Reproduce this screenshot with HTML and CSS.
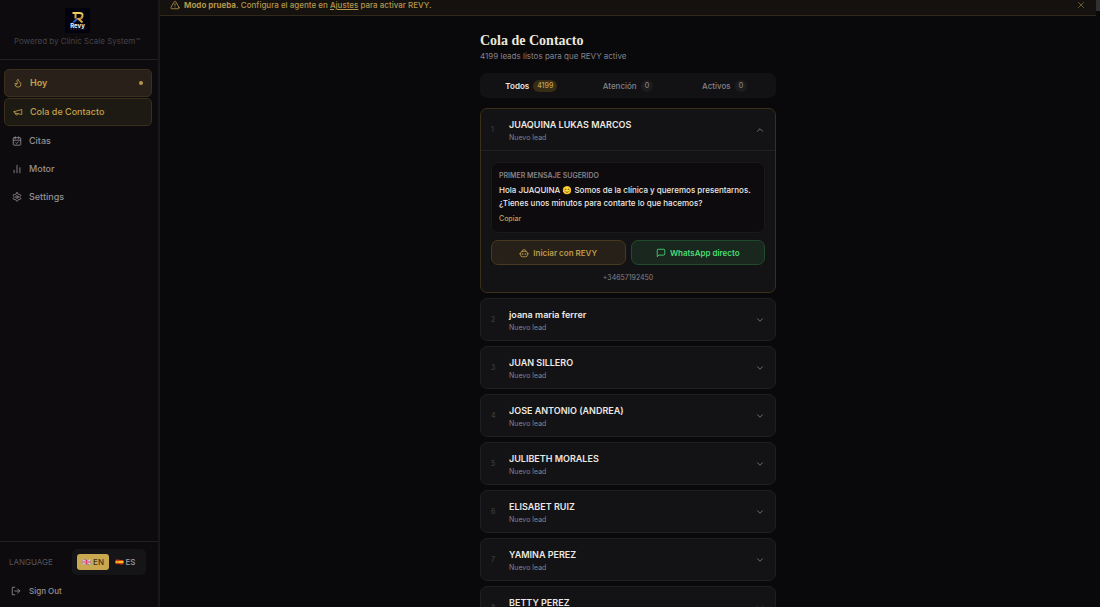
FILE: index.html
```html
<!DOCTYPE html>
<html lang="es">
<head>
<meta charset="utf-8">
<title>Cola de Contacto</title>
<link rel="stylesheet" href="styles.css">
</head>
<body>
<svg class="defs" aria-hidden="true">
  <symbol id="down" viewBox="0 0 24 24"><path d="m6 9 6 6 6-6"/></symbol>
  <symbol id="up" viewBox="0 0 24 24"><path d="m18 15-6-6-6 6"/></symbol>
</svg>
<div class="app">
  <aside class="sidebar">
    <header class="brand">
      <svg class="logo" viewBox="0 0 50 50" role="img" aria-label="Revy">
        <defs><linearGradient id="gold" x1="0" y1="0" x2="0" y2="1"><stop offset="0" stop-color="#f5cf62"/><stop offset="1" stop-color="#b9862b"/></linearGradient></defs>
        <rect width="50" height="50" fill="#02020e"/>
        <path d="M15 10h14q7 0 6 6-1 6-8 6h-4" fill="none" stroke="url(#gold)" stroke-width="4"/>
        <path d="M21 12v9M26 21l9 8" fill="none" stroke="#d9a840" stroke-width="4"/>
        <path d="m14 29 8-8 4 2-7 6z" fill="#2a62c8"/>
        <text x="25" y="39" text-anchor="middle" class="logo-text">Revy</text>
        <path d="M11 42h28" stroke="#64728c" stroke-width="1" stroke-dasharray="3 2"/>
      </svg>
      <p class="powered">Powered by Clinic Scale System™</p>
    </header>
    <nav class="nav">
      <a class="nav-item current today" href="#"><svg class="icon" viewBox="0 0 24 24"><path d="M8.500 14.500A2.500 2.500 0 0 0 11 12c0-1.380-.5-2-1-3-1.070-2.140-.22-4.050 2-6 .5 2.500 2 4.900 4 6.500 2 1.600 3 3.500 3 5.500a7 7 0 1 1-14 0c0-1.150.43-2.290 1-3a2.500 2.500 0 0 0 2.500 2.500z"/></svg>Hoy<span class="dot"></span></a>
      <a class="nav-item current" href="#"><svg class="icon" viewBox="0 0 24 24"><path d="m3 11 18-5v12L3 14v-3zM11.600 16.800a3 3 0 1 1-5.800-1.600"/></svg>Cola de Contacto</a>
      <a class="nav-item" href="#"><svg class="icon" viewBox="0 0 24 24"><rect x="3" y="4" width="18" height="18" rx="2"/><path d="M8 2v4M16 2v4M3 10h18M9 16l2 2 4-4"/></svg>Citas</a>
      <a class="nav-item" href="#"><svg class="icon" viewBox="0 0 24 24"><path d="M5 21v-6M12 21V3M19 21V9"/></svg>Motor</a>
      <a class="nav-item" href="#"><svg class="icon" viewBox="0 0 24 24"><path d="M12.220 2h-.44a2 2 0 0 0-2 2v.18a2 2 0 0 1-1 1.730l-.43.25a2 2 0 0 1-2 0l-.15-.08a2 2 0 0 0-2.730.73l-.22.38a2 2 0 0 0 .73 2.730l.15.1a2 2 0 0 1 1 1.720v.51a2 2 0 0 1-1 1.740l-.15.09a2 2 0 0 0-.73 2.730l.22.38a2 2 0 0 0 2.730.73l.15-.08a2 2 0 0 1 2 0l.43.25a2 2 0 0 1 1 1.730V20a2 2 0 0 0 2 2h.44a2 2 0 0 0 2-2v-.18a2 2 0 0 1 1-1.730l.43-.25a2 2 0 0 1 2 0l.15.08a2 2 0 0 0 2.730-.73l.22-.39a2 2 0 0 0-.73-2.730l-.15-.08a2 2 0 0 1-1-1.740v-.5a2 2 0 0 1 1-1.740l.15-.09a2 2 0 0 0 .73-2.730l-.22-.38a2 2 0 0 0-2.730-.73l-.15.08a2 2 0 0 1-2 0l-.43-.25a2 2 0 0 1-1-1.730V4a2 2 0 0 0-2-2z"/><circle cx="12" cy="12" r="3"/></svg>Settings</a>
    </nav>
    <footer class="side-foot">
      <div class="language">
        <span class="language-label">LANGUAGE</span>
        <div class="toggle">
          <button class="lang on" type="button"><svg class="flag" viewBox="0 0 16 10"><path d="M1 1q4-1 7 0t7 0v8q-4 1-7 0t-7 0z" fill="#5d62ad"/><path d="m1 1 14 8M15 1 1 9" stroke="#eed5df" stroke-width="2"/><path d="M8 1v8M1 5h14" stroke="#f0dce4" stroke-width="3"/><path d="M8 1v8M1 5h14" stroke="#dc3c62" stroke-width="2"/></svg>EN</button>
          <button class="lang" type="button"><svg class="flag" viewBox="0 0 16 10"><path d="M1 1q4-1 7 0t7 0v8q-4 1-7 0t-7 0z" fill="#c92a1c"/><path d="M1 3h14v4H1z" fill="#f5bd25"/><path d="M4 4h2v2H4z" fill="#a84a20"/></svg>ES</button>
        </div>
      </div>
      <button class="signout" type="button"><svg class="icon" viewBox="0 0 24 24"><path d="M9 21H3V3h6M16 17l5-5-5-5M21 12H9"/></svg>Sign Out</button>
    </footer>
  </aside>

  <main class="main">
    <div class="banner">
      <svg class="icon" viewBox="0 0 24 24"><path d="m21.730 18-8-14a2 2 0 0 0-3.480 0l-8 14A2 2 0 0 0 4 21h16a2 2 0 0 0 1.730-3zM12 9v4M12 17h.01"/></svg>
      <p class="banner-text"><strong>Modo prueba.</strong> Configura el agente en <a href="#">Ajustes</a> para activar REVY.</p>
      <button class="close" type="button" aria-label="Cerrar"><svg class="icon" viewBox="0 0 24 24"><path d="M18 6 6 18M6 6l12 12"/></svg></button>
    </div>
    <div class="content">
      <h1 class="title">Cola de Contacto</h1>
      <p class="subtitle">4199 leads listos para que REVY active</p>
      <div class="tabs">
        <button class="tab selected" type="button">Todos<span class="count">4199</span></button>
        <button class="tab" type="button">Atención<span class="count">0</span></button>
        <button class="tab" type="button">Activos<span class="count">0</span></button>
      </div>
      <div class="leads">
        <article class="lead open">
          <button class="lead-head" type="button"><span class="num">1</span><span class="who"><span class="name">JUAQUINA LUKAS MARCOS</span><span class="state">Nuevo lead</span></span><svg class="chev"><use href="#up"/></svg></button>
          <div class="lead-body">
            <div class="message">
              <h2 class="message-title">PRIMER MENSAJE SUGERIDO</h2>
              <p class="message-text">Hola JUAQUINA 😊 Somos de la clínica y queremos presentarnos. ¿Tienes unos minutos para contarte lo que hacemos?</p>
              <button class="copy" type="button">Copiar</button>
            </div>
            <div class="actions">
              <button class="action revy" type="button"><svg class="icon" viewBox="0 0 24 24"><rect x="4" y="8" width="16" height="13" rx="4"/><path d="M8 8V6q0-2 4-2t4 2v2M1 14h3M20 14h3M9 13v3M15 13v3"/></svg>Iniciar con REVY</button>
              <button class="action whatsapp" type="button"><svg class="icon" viewBox="0 0 24 24"><path d="M21 15a2 2 0 0 1-2 2H7l-4 4V5a2 2 0 0 1 2-2h14a2 2 0 0 1 2 2z"/></svg>WhatsApp directo</button>
            </div>
            <p class="phone">+34657192450</p>
          </div>
        </article>
        <article class="lead"><button class="lead-head" type="button"><span class="num">2</span><span class="who"><span class="name">joana maria ferrer</span><span class="state">Nuevo lead</span></span><svg class="chev"><use href="#down"/></svg></button></article>
        <article class="lead"><button class="lead-head" type="button"><span class="num">3</span><span class="who"><span class="name">JUAN SILLERO</span><span class="state">Nuevo lead</span></span><svg class="chev"><use href="#down"/></svg></button></article>
        <article class="lead"><button class="lead-head" type="button"><span class="num">4</span><span class="who"><span class="name">JOSE ANTONIO (ANDREA)</span><span class="state">Nuevo lead</span></span><svg class="chev"><use href="#down"/></svg></button></article>
        <article class="lead"><button class="lead-head" type="button"><span class="num">5</span><span class="who"><span class="name">JULIBETH MORALES</span><span class="state">Nuevo lead</span></span><svg class="chev"><use href="#down"/></svg></button></article>
        <article class="lead"><button class="lead-head" type="button"><span class="num">6</span><span class="who"><span class="name">ELISABET RUIZ</span><span class="state">Nuevo lead</span></span><svg class="chev"><use href="#down"/></svg></button></article>
        <article class="lead"><button class="lead-head" type="button"><span class="num">7</span><span class="who"><span class="name">YAMINA PEREZ</span><span class="state">Nuevo lead</span></span><svg class="chev"><use href="#down"/></svg></button></article>
        <article class="lead"><button class="lead-head" type="button"><span class="num">8</span><span class="who"><span class="name">BETTY PEREZ</span><span class="state">Nuevo lead</span></span><svg class="chev"><use href="#down"/></svg></button></article>
      </div>
    </div>
  </main>
  <div class="scroll"><div class="thumb"></div></div>
</div>
</body>
</html>
```
FILE: styles.css
```css
* { box-sizing: border-box; margin: 0; padding: 0; }
body {
  background: #09080b;
  color: #ece8e1;
  font-family: Inter, "Liberation Sans", "Noto Color Emoji", sans-serif;
  font-size: 8px;
  line-height: 12px;
}
button { background: none; border: 0; color: inherit; font: inherit; cursor: pointer; }
a { color: inherit; }
.defs { display: none; }
.icon, .chev {
  width: 10px;
  height: 10px;
  flex: none;
  fill: none;
  stroke: currentColor;
  stroke-width: 2;
  stroke-linecap: round;
  stroke-linejoin: round;
}
.app { display: flex; height: 100vh; overflow: hidden; }

.sidebar {
  display: flex;
  flex-direction: column;
  flex: none;
  width: 160px;
  background: #0d0b0e;
  border-right: 2px solid #19181b;
}
.brand {
  display: flex;
  flex-direction: column;
  align-items: center;
  gap: 2px;
  padding: 8px 6px 12px 2px;
  border-bottom: 1px solid #212023;
}
.logo { width: 25px; height: 25px; }
.logo-text { fill: #f4f4f8; font-size: 12px; font-weight: 700; }
.powered { color: #454347; white-space: nowrap; }
.nav { display: flex; flex: 1; flex-direction: column; gap: 1px; padding: 9px 6px 0 4px; }
.nav-item {
  display: flex;
  align-items: center;
  gap: 7px;
  height: 27px;
  padding: 0 8px;
  color: #949195;
  font-size: 9px;
  font-weight: 500;
  text-decoration: none;
}
.nav-item.current {
  height: 28px;
  border: 1px solid #3a301b;
  border-radius: 5px;
  background: #1d1913;
  color: #c4a24c;
}
.nav-item.today { background: #292119; font-weight: 600; }
.dot { width: 4px; height: 4px; margin-left: auto; border-radius: 50%; background: #b6954a; }
.side-foot { padding: 7px 12px 10px 9px; border-top: 1px solid #212023; }
.language { display: flex; align-items: center; justify-content: space-between; }
.language-label { color: #58555a; }
.toggle { display: flex; padding: 5px; border-radius: 5px; background: #151417; }
.lang {
  display: flex;
  align-items: center;
  justify-content: center;
  gap: 2px;
  width: 32px;
  height: 16px;
  border-radius: 3px;
  color: #a09da3;
  font-weight: 500;
}
.lang.on { background: #c9a84f; color: #3c321b; }
.flag { width: 9px; height: 6px; }
.signout {
  display: flex;
  align-items: center;
  gap: 8px;
  margin-top: 10px;
  padding-left: 2px;
  color: #949195;
  font-weight: 500;
}

.main { flex: 1; min-width: 0; }
.banner {
  display: flex;
  align-items: center;
  gap: 4px;
  height: 16px;
  padding: 0 10px 5px;
  border-bottom: 1px solid #30281a;
  background: #15110f;
  color: #b3964a;
}
.banner-text { flex: 1; font-weight: 500; }
.banner-text strong { font-weight: 700; }
.close { display: flex; color: #7a6935; }
.content { width: 100%; max-width: 296px; margin: 0 auto; padding-top: 16px; }
.title {
  color: #ece6da;
  font-family: "Liberation Serif", serif;
  font-size: 14px;
  font-weight: 700;
  line-height: 18px;
}
.subtitle { color: #858287; }
.tabs {
  display: grid;
  grid-template-columns: repeat(3, 1fr);
  margin-top: 11px;
  padding: 3px;
  border-radius: 7px;
  background: #121114;
}
.tab {
  display: flex;
  align-items: center;
  justify-content: center;
  gap: 4px;
  height: 19px;
  color: #858287;
  font-weight: 500;
}
.tab.selected { color: #ece8e1; font-weight: 600; }
.count {
  min-width: 12px;
  padding: 0 4px;
  border-radius: 6px;
  background: #1c1b1e;
  font-size: 7px;
  font-weight: 500;
}
.selected .count { background: #372c16; color: #c4a24c; }
.leads { display: flex; flex-direction: column; gap: 5px; margin-top: 10px; }
.lead { border: 1px solid #1f1e21; border-radius: 7px; background: #131215; }
.lead.open { border-color: #3a2f19; }
.lead-head {
  display: flex;
  align-items: center;
  width: 100%;
  height: 41px;
  padding: 0 10px;
  text-align: left;
}
.num { width: 18px; color: #47454a; font-size: 7px; }
.who { display: flex; flex: 1; flex-direction: column; gap: 1px; padding-top: 3px; }
.name { font-size: 9px; font-weight: 600; line-height: 13px; }
.state { color: #858287; font-size: 7px; }
.chev { color: #858287; }
.lead-body { padding: 11px 10px 8px; border-top: 1px solid #212023; }
.message { padding: 7px 7px 7px; border: 1px solid #1a191c; border-radius: 7px; background: #0d0b0e; }
.message-title { color: #858287; font-size: 7px; font-weight: 600; }
.message-text { margin-top: 2px; font-weight: 500; line-height: 13px; }
.copy { display: block; margin-top: 3px; color: #c4a24c; font-size: 7px; font-weight: 500; }
.actions { display: grid; grid-template-columns: 1fr 1fr; gap: 5px; margin-top: 7px; }
.action {
  display: flex;
  align-items: center;
  justify-content: center;
  gap: 4px;
  height: 25px;
  border: 1px solid #483a1e;
  border-radius: 7px;
  font-weight: 600;
}
.revy { background: #262018; color: #bd9b4a; }
.whatsapp { border-color: #1f4a2c; background: #1a271e; color: #4ade78; }
.phone { margin-top: 7px; color: #858287; font-size: 7px; text-align: center; }
.scroll { flex: none; width: 4px; }
.thumb { height: 11px; background: #323035; }
```
